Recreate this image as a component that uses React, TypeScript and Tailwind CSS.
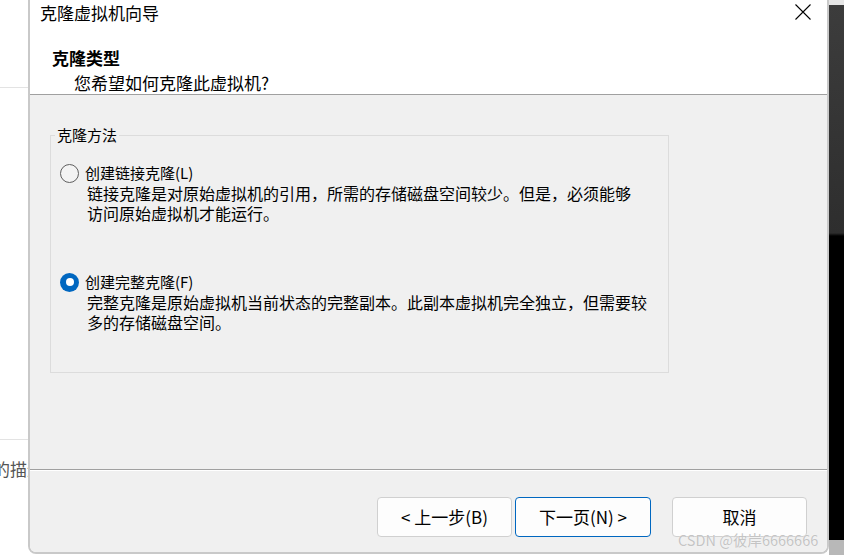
import React from 'react';

function Radio({ checked }: { checked?: boolean }) {
  if (checked) {
    return (
      <span className="flex h-[19px] w-[19px] shrink-0 items-center justify-center rounded-full bg-[#0067c0]">
        <span className="h-[8px] w-[8px] rounded-full bg-white" />
      </span>
    );
  }
  return <span className="h-[19px] w-[19px] shrink-0 rounded-full border border-[#5f5f5f] bg-[#f3f3f3]" />;
}

function Option({ checked, label, lines }: { checked?: boolean; label: string; lines: string[] }) {
  return (
    <div>
      <div className="flex h-[20px] items-center">
        <Radio checked={checked} />
        <span className="ml-[6px] text-[15px] leading-[20px]">{label}</span>
      </div>
      <div className="pl-[27px] text-[16px] leading-[20px]">
        {lines.map((l) => (
          <div key={l}>{l}</div>
        ))}
      </div>
    </div>
  );
}

export default function App() {
  return (
    <div className="relative flex h-[555px] w-[844px] overflow-hidden bg-white font-['Noto_Sans_CJK_SC','Microsoft_YaHei',sans-serif] text-black">
      {/* page behind, left edge */}
      <div className="flex w-[28px] shrink-0 flex-col overflow-hidden">
        <div className="h-[88px] border-b border-[#e3e3e3]" />
        <div className="h-[352px] border-b border-[#e3e3e3]" />
        <div className="mt-[17px] ml-[-7px] whitespace-nowrap text-[17px] leading-[24px] text-[#555]">的描述</div>
      </div>

      {/* dialog */}
      <div className="flex h-[554px] w-[801px] shrink-0 flex-col overflow-hidden rounded-b-[8px] border-x-2 border-b-2 border-[#c9c9c9]">
        <div className="h-[95px] border-b border-[#a0a0a0] bg-white">
          <div className="flex h-[26px] items-center justify-between pl-[10px] pr-[16px]">
            <span className="text-[17px] leading-[26px]">克隆虚拟机向导</span>
            <svg width="16" height="16" viewBox="0 0 16 16" className="-mt-[2px]">
              <path d="M0.5 0.5 L15.5 15.5 M15.5 0.5 L0.5 15.5" stroke="#000" strokeWidth="1.1" fill="none" />
            </svg>
          </div>
          <div className="mt-[21px] pl-[22px] text-[17px] font-bold leading-[22px]">克隆类型</div>
          <div className="mt-[3px] pl-[44px] text-[17px] leading-[22px]">您希望如何克隆此虚拟机?</div>
        </div>

        <div className="h-[375px] border-b border-[#a0a0a0] bg-[#f0f0f0] pl-[20px] pt-[30px]">
          <fieldset className="h-[248px] w-[619px] border border-[#dcdcdc] pl-[9px] pt-[18px]">
            <legend className="-ml-[5px] px-[2px] text-[15px] leading-[20px]">克隆方法</legend>
            <Option
              label="创建链接克隆(L)"
              lines={['链接克隆是对原始虚拟机的引用，所需的存储磁盘空间较少。但是，必须能够', '访问原始虚拟机才能运行。']}
            />
            <div className="h-[49px]" />
            <Option
              checked
              label="创建完整克隆(F)"
              lines={['完整克隆是原始虚拟机当前状态的完整副本。此副本虚拟机完全独立，但需要较', '多的存储磁盘空间。']}
            />
          </fieldset>
        </div>

        <div className="flex flex-1 items-start justify-end border-t border-white bg-[#f0f0f0] pr-[20px] pt-[26px]">
          <button className="h-[40px] w-[135px] rounded-[4px] border border-[#d0d0d0] bg-[#fdfdfd] text-[17px]">
            &lt; 上一步(B)
          </button>
          <button className="ml-[3px] h-[40px] w-[136px] rounded-[4px] border border-[#0067c0] bg-[#fdfdfd] text-[17px]">
            下一页(N) &gt;
          </button>
          <button className="ml-[21px] h-[40px] w-[135px] rounded-[4px] border border-[#d0d0d0] bg-[#fdfdfd] text-[17px]">
            取消
          </button>
        </div>
      </div>

      {/* window behind, right edge */}
      <div className="w-[15px] shrink-0 bg-[linear-gradient(to_bottom,#e6e6e6_0px,#e6e6e6_5px,#3c3c3c_5px,#2e2e2e_233px,#000_236px,#000_540px,#b8b8b8_540px)]" />

      <div className="absolute left-[678px] top-[530px] whitespace-nowrap text-[14.5px] leading-[20px] text-[#c4c4c4] [text-shadow:0_0_1px_#fff]">
        CSDN @彼岸6666666
      </div>
    </div>
  );
}
